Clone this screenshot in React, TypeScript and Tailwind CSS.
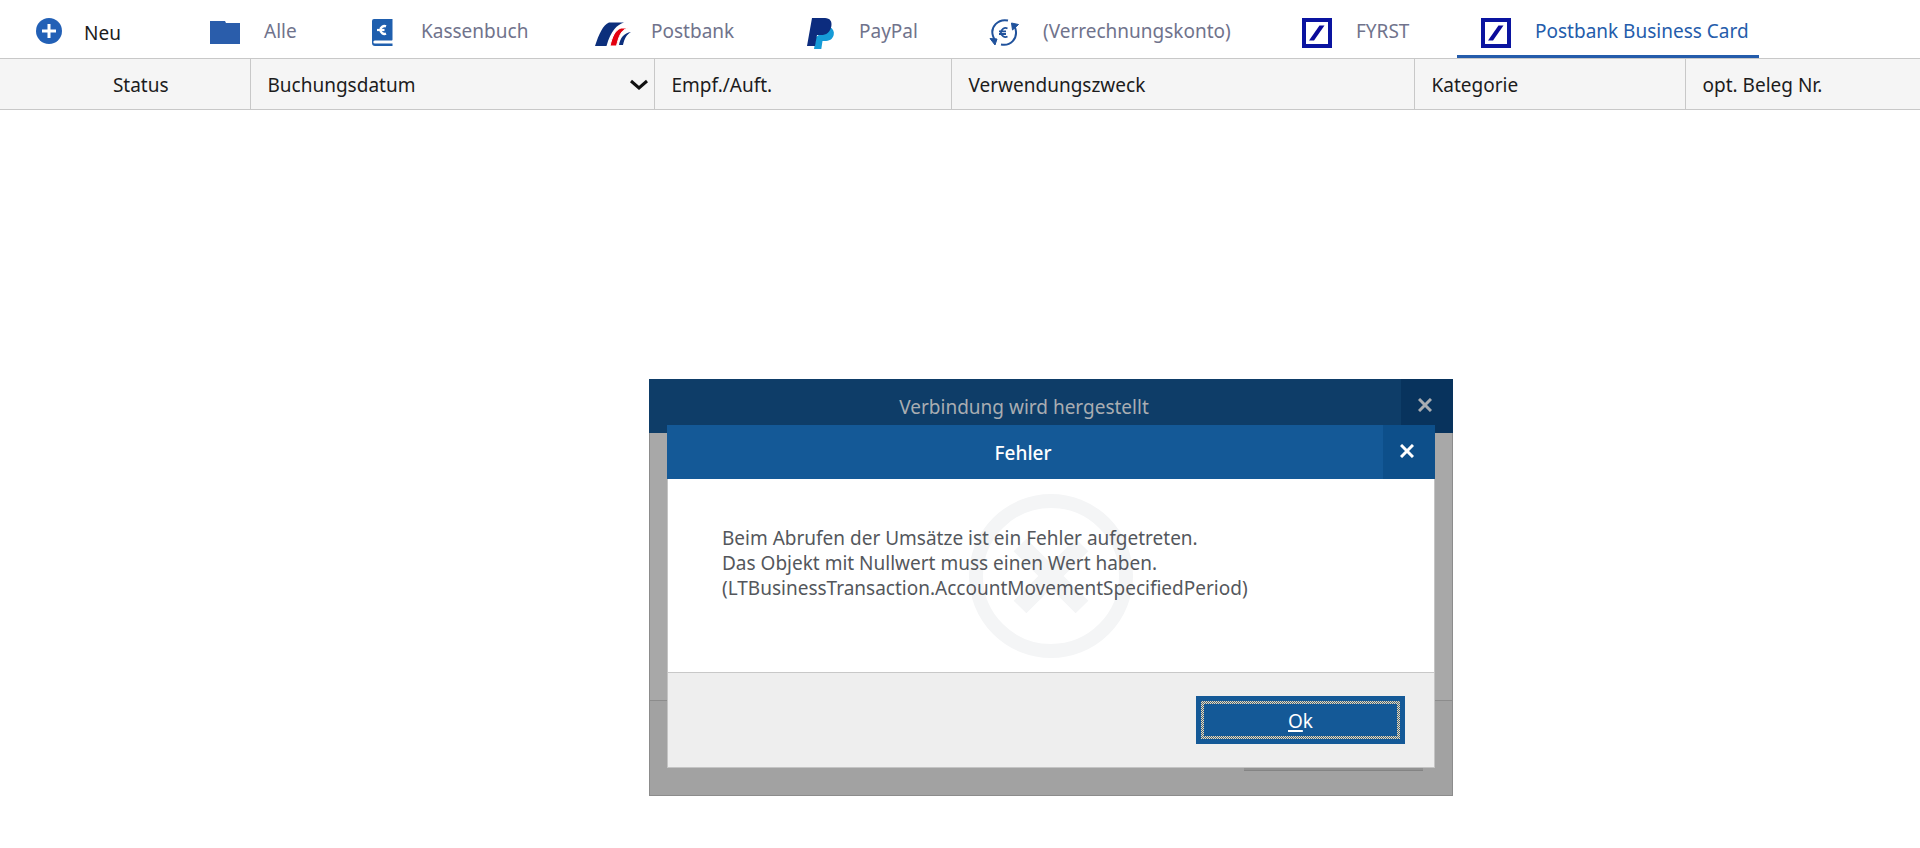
import React from 'react';

function FolderIcon() {
  return (
    <svg width="30" height="30" viewBox="0 0 30 30" aria-hidden="true">
      <path d="M0 3h15l1 2h14v21H0z" fill="#2a5dab" />
    </svg>
  );
}

function CashBookIcon() {
  return (
    <svg width="30" height="30" viewBox="0 0 30 30" aria-hidden="true">
      <path d="M7 1h18.500v20.500a1 1 0 0 1-.5 1H7.800a1.500 1.500 0 0 0 0 3h17.700V28H8a3 3 0 0 1-3-3V3a2 2 0 0 1 2-2z" fill="#1f5fae" />
      <path d="M19 8.300a4 4 0 1 0 0 7.400" fill="none" stroke="#fff" strokeWidth="2.500" />
      <path d="M10 12h7.500" stroke="#fff" strokeWidth="2.200" />
    </svg>
  );
}

function PostbankIcon() {
  return (
    <svg width="38" height="30" viewBox="0 0 38 30" className="-mx-1" aria-hidden="true">
      <path d="M2 28C6 16 10 7 16 4.500h15C24 7 18 12 13.500 28z" fill="#0c2f7c" />
      <path d="M17 28c2-9 5-16 11-18h7C28 12 26 18 23.500 28z" fill="#e3000f" stroke="#fff" strokeWidth="1" />
      <path d="M26 27c1-7 5-12 12-13-4.500 2.500-6.500 6.500-8 13z" fill="#0c2f7c" />
    </svg>
  );
}

function PayPalIcon() {
  return (
    <svg width="30" height="32" viewBox="0 0 30 32" aria-hidden="true">
      <path d="M25 9c3 2 4.500 4.500 3.700 8-1.200 4.500-4.500 6-9.200 6h-2l-1.200 8H9l2-12z" fill="#169bd7" />
      <path d="M7 0h13c5 0 7.300 3.500 6.300 8.500-1.200 6-5 8.500-10.300 8.500h-4l-2 11H2z" fill="#0c2c7e" />
    </svg>
  );
}

function TransferIcon() {
  return (
    <svg width="30" height="30" viewBox="0 0 30 30" fill="none" stroke="#20529c" strokeWidth="2" aria-hidden="true">
      <path d="M19 2.500C9 .5 1 9 4 18c.5 1.800 1 2.500 2 3.800" />
      <path d="M12 26.500C21.500 28.500 29 20.500 26.500 11c-.5-1.800-1-2.500-2-3.800" />
      <path d="M1 20.500l7 .5-2 6z" fill="#20529c" strokeWidth="1" />
      <path d="M29.500 6.500L22.500 5l1 7z" fill="#20529c" strokeWidth="1" />
      <path d="M18.500 10.500a4.500 4.500 0 1 0 0 8M10 13.300h7M10 16h7" strokeWidth="1.800" />
    </svg>
  );
}

function DeutscheBankIcon() {
  return (
    <svg width="30" height="30" viewBox="0 0 30 30" aria-hidden="true">
      <path d="M2 2h26v26H2z" fill="#fff" stroke="#0a14a0" strokeWidth="4" />
      <path d="M7 22.500L17.500 7.500h5L12 22.500z" fill="#0a0a9a" />
    </svg>
  );
}

const tabs = [
  { name: 'Alle', icon: <FolderIcon />, width: 'w-[120px]' },
  { name: 'Kassenbuch', icon: <CashBookIcon />, width: 'w-[193px]' },
  { name: 'Postbank', icon: <PostbankIcon />, width: 'w-[171px]' },
  { name: 'PayPal', icon: <PayPalIcon />, width: 'w-[147px]' },
  { name: '(Verrechnungskonto)', icon: <TransferIcon />, width: 'w-[276px]' },
  { name: 'FYRST', icon: <DeutscheBankIcon />, width: 'w-[142px]' },
  { name: 'Postbank Business Card', icon: <DeutscheBankIcon />, width: 'w-[302px]', active: true },
];

const columns = [
  { name: 'Status', style: 'w-[250px] pl-8 text-center' },
  { name: 'Buchungsdatum', style: 'w-[404px] pl-[17px] text-left', sorted: true },
  { name: 'Empf./Auft.', style: 'w-[297px] pl-[17px] text-left' },
  { name: 'Verwendungszweck', style: 'w-[463px] pl-[17px] text-left' },
  { name: 'Kategorie', style: 'w-[271px] pl-[17px] text-left' },
  { name: 'opt. Beleg Nr.', style: 'pl-[17px] text-left' },
];

function CloseIcon() {
  return (
    <svg width="14" height="14" viewBox="0 0 14 14" stroke="currentColor" strokeWidth="3" aria-hidden="true">
      <path d="M1 1l12 12M13 1L1 13" />
    </svg>
  );
}

function ErrorDialog() {
  return (
    <section
      role="alertdialog"
      aria-labelledby="error-title"
      className="absolute left-[17px] right-[17px] top-[45px] flex h-[343px] flex-col border border-[#c4c4c4] bg-white"
    >
      <header className="-mx-px -mt-px flex h-[54px] shrink-0 bg-[#145997] text-white">
        <h2 id="error-title" className="flex flex-1 items-center justify-center pr-1 pt-0.5 font-medium">
          Fehler
        </h2>
        <button type="button" aria-label="Schließen" className="flex w-[52px] items-center justify-center bg-[#0d4f8a] pb-0.5 pr-[5px]">
          <CloseIcon />
        </button>
      </header>
      <div className="relative flex-1 px-[54px] pt-[47px]">
        <svg width="164" height="164" viewBox="0 0 164 164" className="absolute left-1/2 top-[15px] -translate-x-1/2" aria-hidden="true">
          <circle cx="82" cy="82" r="75" fill="none" stroke="#f4f5f6" strokeWidth="14" />
          <path d="M51 51l62 62M113 51l-62 62" stroke="#f4f5f6" strokeWidth="18" />
        </svg>
        <p className="relative leading-[25px] text-[#54575c]">
          Beim Abrufen der Umsätze ist ein Fehler aufgetreten.
          <br />
          Das Objekt mit Nullwert muss einen Wert haben.
          <br />
          (LTBusinessTransaction.AccountMovementSpecifiedPeriod)
        </p>
      </div>
      <footer className="flex h-[95px] shrink-0 items-center justify-end border-t border-[#c8c8c8] bg-[#eee] pr-[29px]">
        <button type="button" className="h-12 w-[209px] bg-[#145997] p-[5px] text-white">
          <span className="block h-full bg-[repeating-conic-gradient(#f5dcb4_0_25%,#3a6688_0_50%)] bg-[length:2px_2px] p-[3px]">
            <span className="flex h-full items-center justify-center bg-[#145997] pt-0.5">
              <span className="underline decoration-2 underline-offset-2">O</span>k
            </span>
          </span>
        </button>
      </footer>
    </section>
  );
}

function ConnectionDialog() {
  return (
    <section
      role="dialog"
      aria-labelledby="connection-title"
      className="absolute left-[649px] top-[379px] flex h-[417px] w-[804px] flex-col border border-[#8c8c8c] bg-[#a8a8a8]"
    >
      <header className="-mx-px -mt-px flex h-[54px] shrink-0 bg-[#0e3d68] text-[#a9adb2]">
        <h2 id="connection-title" className="flex flex-1 items-center justify-center pr-0.5 pt-0.5">
          Verbindung wird hergestellt
        </h2>
        <button type="button" aria-label="Schließen" className="flex w-[52px] items-center justify-center bg-[#08335d] pb-0.5 pr-[5px]">
          <CloseIcon />
        </button>
      </header>
      <div className="flex-1" />
      <footer className="flex h-[95px] shrink-0 justify-end border-t border-[#8c8c8c] bg-[#a2a2a2] pr-[29px] pt-[22px]">
        <div className="h-12 w-[179px] border-b border-[#848484] bg-[#929292]" />
      </footer>
      <ErrorDialog />
    </section>
  );
}

function App() {
  return (
    <div className="relative min-h-screen overflow-hidden bg-white font-['Noto_Sans',sans-serif] text-[19px] leading-6 text-[#1c1c1c]">
      <nav className="flex h-[59px] items-stretch border-b border-[#c8c8c8]">
        <button type="button" className="flex w-[186px] shrink-0 items-center gap-[22px] pl-9 pt-2">
          <svg width="26" height="26" viewBox="0 0 26 26" className="-mt-1" aria-hidden="true">
            <circle cx="13" cy="13" r="13" fill="#2260b6" />
            <path d="M13 6v14M6 13h14" stroke="#fff" strokeWidth="3" />
          </svg>
          Neu
        </button>
        <div className="flex gap-[37px]">
          {tabs.map((tab) => (
            <button
              key={tab.name}
              type="button"
              className={`flex shrink-0 items-start gap-6 whitespace-nowrap border-b-3 pl-6 pt-[18px] ${tab.width} ${
                tab.active ? 'border-[#245cab] text-[#245cab]' : 'border-transparent text-[#70738c]'
              }`}
            >
              {tab.icon}
              <span className="pt-px">{tab.name}</span>
            </button>
          ))}
        </div>
      </nav>

      <table className="w-full table-fixed border-collapse">
        <thead>
          <tr className="h-[50px] border-b border-[#c8c8c8] bg-[#f5f5f5]">
            {columns.map((column) => (
              <th key={column.name} className={`border-r border-[#c8c8c8] p-0 pt-[3px] font-normal last:border-r-0 ${column.style}`}>
                {column.sorted ? (
                  <span className="flex items-center justify-between pr-[6px]">
                    {column.name}
                    <svg width="18" height="12" viewBox="0 0 18 12" fill="none" stroke="#111" strokeWidth="3" aria-hidden="true">
                      <path d="M1 2l8 7 8-7" />
                    </svg>
                  </span>
                ) : (
                  column.name
                )}
              </th>
            ))}
          </tr>
        </thead>
      </table>

      <ConnectionDialog />
    </div>
  );
}

export default App;
